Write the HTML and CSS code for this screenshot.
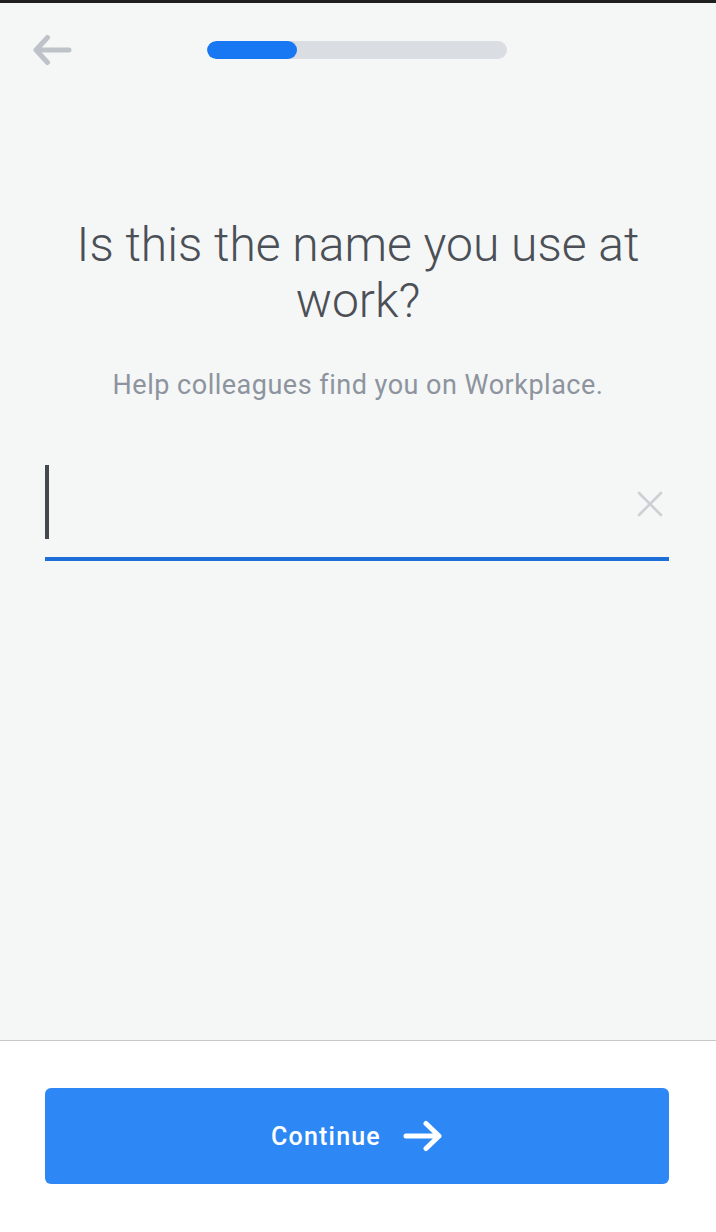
FILE: index.html
```html
<!DOCTYPE html>
<html lang="en">
<head>
  <meta charset="UTF-8">
  <meta name="viewport" content="width=device-width, initial-scale=1.0">
  <title>Workplace - Your name</title>
  <link rel="stylesheet" href="styles.css">
</head>
<body>

  <div class="tela">
    <header class="topo">
      <button class="voltar" aria-label="Back">
        <svg width="40" height="32" viewBox="0 0 40 32">
          <path d="M37 16 H4 M15.5 3.5 L4 16 L15.5 28.5" fill="none" stroke="#bec3c9" stroke-width="5" stroke-linecap="round" stroke-linejoin="round"/>
        </svg>
      </button>
      <div class="progresso">
        <div class="progresso-fill" style="width: 30%;"></div>
      </div>
    </header>

    <main class="conteudo">
      <h1 class="titulo">Is this the name you use at work?</h1>
      <p class="subtitulo">Help colleagues find you on Workplace.</p>

      <div class="campo">
        <span class="cursor"></span>
        <button class="limpar" aria-label="Clear">
          <svg width="26" height="26" viewBox="0 0 26 26">
            <path d="M2 2 L24 24 M24 2 L2 24" fill="none" stroke="#ccd0d5" stroke-width="2.6" stroke-linecap="round"/>
          </svg>
        </button>
      </div>
    </main>

    <footer class="rodape">
      <button class="continuar">
        <span>Continue</span>
        <svg width="40" height="32" viewBox="0 0 40 32">
          <path d="M3 16 H36 M23 3.5 L36 16 L23 28.5" fill="none" stroke="#ffffff" stroke-width="5" stroke-linecap="round" stroke-linejoin="round"/>
        </svg>
      </button>
    </footer>
  </div>

</body>
</html>
```

FILE: styles.css
```css
body {
  font-family: 'Roboto', 'Liberation Sans', sans-serif;
  margin: 0;
  padding: 0;
  background-color: #f5f6f6;
}

.tela {
  display: flex;
  flex-direction: column;
  height: 1232px;
  border-top: 3px solid #1f1f1f;
  box-sizing: border-box;
}

.topo {
  display: flex;
  align-items: center;
  height: 94px;
  padding-left: 32px;
}

.voltar {
  border: none;
  background: none;
  padding: 0;
  width: 40px;
  height: 32px;
  cursor: pointer;
}

.progresso {
  width: 300px;
  height: 18px;
  margin-left: 135px;
  background-color: #dadde1;
  border-radius: 9px;
  overflow: hidden;
}

.progresso-fill {
  height: 100%;
  background-color: #1877f2;
  border-radius: 9px;
}

.conteudo {
  flex: 1;
  padding: 120px 45px 0 45px;
}

.titulo {
  margin: 0 auto;
  max-width: 600px;
  font-size: 48px;
  font-weight: 300;
  line-height: 56px;
  color: #4b4f56;
  text-align: center;
}

.subtitulo {
  margin: 40px 0 0 0;
  font-size: 27px;
  letter-spacing: 0.5px;
  line-height: 32px;
  color: #8d949e;
  text-align: center;
}

.campo {
  display: flex;
  align-items: center;
  justify-content: space-between;
  margin-top: 65px;
  height: 91px;
  border-bottom: 4px solid #1c6fd9;
  margin-right: 2px;
}

.cursor {
  display: block;
  width: 4px;
  height: 74px;
  margin-top: -20px;
  background-color: #444950;
}

.limpar {
  border: none;
  background: none;
  padding: 0;
  margin-right: 6px;
  margin-top: -16px;
  width: 26px;
  height: 26px;
  cursor: pointer;
}

.rodape {
  background-color: #ffffff;
  border-top: 1px solid #c8c8c8;
  height: 192px;
  padding: 47px 47px 0 45px;
  box-sizing: border-box;
}

.continuar {
  display: flex;
  align-items: center;
  justify-content: center;
  gap: 22px;
  width: 100%;
  height: 96px;
  border: none;
  border-radius: 6px;
  background-color: #2d88f5;
  color: white;
  font-family: 'Roboto', 'Liberation Sans', sans-serif;
  font-size: 25px;
  letter-spacing: 1.2px;
  font-weight: 500;
  cursor: pointer;
}
```
